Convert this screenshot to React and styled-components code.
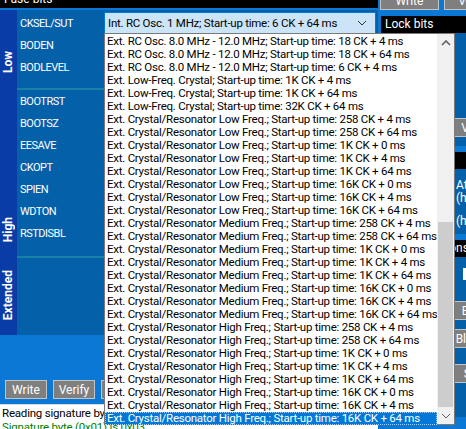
import React from 'react';
import styled, { createGlobalStyle } from 'styled-components';

const GlobalStyle = createGlobalStyle`
  html, body {
    margin: 0;
    padding: 0;
    background: #0a78d4;
    overflow: hidden;
  }
  body {
    font-family: Roboto, "Liberation Sans", sans-serif;
    font-size: 12px;
  }
`;

const lowRows = ['CKSEL/SUT', 'BODEN', 'BODLEVEL'];
const highRows = ['BOOTRST', 'BOOTSZ', 'EESAVE', 'CKOPT', 'SPIEN', 'WDTON', 'RSTDISBL'];

const rcOsc = 'Ext. RC Osc. 8.0 MHz - 12.0 MHz; Start-up time: ';
const lowFreq = 'Ext. Low-Freq. Crystal; Start-up time: ';
const crystal = (f) => `Ext. Crystal/Resonator ${f} Freq.; Start-up time: `;
const times = ['258 CK + 4 ms', '258 CK + 64 ms', '1K CK + 0 ms', '1K CK + 4 ms', '1K CK + 64 ms', '16K CK + 0 ms', '16K CK + 4 ms', '16K CK + 64 ms'];

const options = [
  rcOsc + '18 CK + 4 ms',
  rcOsc + '18 CK + 64 ms',
  rcOsc + '6 CK + 4 ms',
  lowFreq + '1K CK + 4 ms',
  lowFreq + '1K CK + 64 ms',
  lowFreq + '32K CK + 64 ms',
  ...times.map((t) => crystal('Low') + t),
  ...times.map((t) => crystal('Medium') + t),
  ...times.map((t) => crystal('High') + t),
];
const selected = options.length - 1;

const Chevron = ({ up, color = '#333' }) => (
  <svg width="10" height="6" viewBox="0 0 10 6">
    <polyline
      points={up ? '1,5 5,1 9,5' : '1,1 5,5 9,1'}
      fill="none"
      stroke={color}
      strokeWidth={up ? 1.6 : 1}
    />
  </svg>
);

function App() {
  return (
    <>
      <GlobalStyle />
      <Window>
        <FuseColumn>
          <SectionHeader>Fuse bits</SectionHeader>
          <FuseBody>
            <Group>
              <Strip pad={17}><StripLabel>Low</StripLabel></Strip>
              <GroupRows top={2} bottom={10}>
                <Row>
                  <Label>{lowRows[0]}</Label>
                  <Combo>
                    <ComboText>Int. RC Osc. 1 MHz; Start-up time: 6 CK + 64 ms</ComboText>
                    <Chevron />
                    <DropList>
                      <Items>
                        {options.map((o, i) => (
                          <Item key={i} active={i === selected}>{o}</Item>
                        ))}
                      </Items>
                      <ScrollBar>
                        <ArrowBox><Chevron up color="#606060" /></ArrowBox>
                        <Track>
                          <Thumb />
                        </Track>
                        <ArrowBox><Chevron color="#606060" /></ArrowBox>
                      </ScrollBar>
                    </DropList>
                  </Combo>
                </Row>
                {lowRows.slice(1).map((r) => (
                  <Row key={r}><Label>{r}</Label></Row>
                ))}
              </GroupRows>
            </Group>
            <Group>
              <Strip pad={16}><StripLabel>High</StripLabel></Strip>
              <GroupRows top={0} bottom={12}>
                {highRows.map((r) => (
                  <Row key={r}><Label>{r}</Label></Row>
                ))}
              </GroupRows>
            </Group>
            <Group>
              <Strip pad={15}><StripLabel>Extended</StripLabel></Strip>
              <GroupRows top={0} bottom={77} last />
            </Group>
          </FuseBody>
          <ButtonBar>
            <GrayButton>Write</GrayButton>
            <GrayButton>Verify</GrayButton>
            <GrayButton>Read</GrayButton>
          </ButtonBar>
          <Log>
            <LogLine>Reading signature bytes...</LogLine>
            <LogLine ok>Signature byte (0x01) is 0x03</LogLine>
          </Log>
        </FuseColumn>

        <SideColumn>
          <SideButtons>
            <GrayButton wide>Write</GrayButton>
            <GrayButton wide>Verify</GrayButton>
          </SideButtons>
          <SideGroup>
            <SectionHeader>Lock bits</SectionHeader>
            <LockBody>
              <SideButtons>
                <GrayButton wide>Write</GrayButton>
                <GrayButton wide>Verify</GrayButton>
              </SideButtons>
            </LockBody>
          </SideGroup>
          <SideGroup>
            <SectionHeader>Signature</SectionHeader>
            <InfoBody>
              <InfoRow><span>Vendor</span><span>Atmel</span></InfoRow>
              <InfoRow><span>Device</span><span>(hex)</span></InfoRow>
              <InfoRow spaced><span>Size</span><span>(hex)</span></InfoRow>
            </InfoBody>
          </SideGroup>
          <SideGroup>
            <SectionHeader>Chip operations</SectionHeader>
            <OpsBody>
              <InputBox />
              <SideButtons>
                <GrayButton wide>Read</GrayButton>
                <GrayButton wide>Erase</GrayButton>
              </SideButtons>
              <SideButtons>
                <GrayButton wide>Check</GrayButton>
                <GrayButton wide>Blank is</GrayButton>
              </SideButtons>
              <SideButtons spaced>
                <GrayButton wide>Load</GrayButton>
                <GrayButton wide>Save</GrayButton>
              </SideButtons>
            </OpsBody>
          </SideGroup>
        </SideColumn>
      </Window>
    </>
  );
}

const Window = styled.div`
  width: 466px;
  height: 438px;
  margin-top: -9px;
  display: grid;
  grid-template-columns: 378px 140px;
  overflow: hidden;
  background: #0a78d4;
`;

const FuseColumn = styled.div`
  display: flex;
  flex-direction: column;
  min-width: 0;
`;

const SectionHeader = styled.div`
  height: 17px;
  line-height: 17px;
  padding-left: 4px;
  background: #000;
  color: #fff;
  font-size: 12px;
  white-space: nowrap;
`;

const FuseBody = styled.div`
  border-top: 2px solid #0a78d4;
  display: flex;
  flex-direction: column;
`;

const Group = styled.div`
  display: flex;
`;

const Strip = styled.div`
  width: 17px;
  flex-shrink: 0;
  background: #0a3ca8;
  display: flex;
  flex-direction: column;
  justify-content: flex-end;
  align-items: center;
  padding-bottom: ${(p) => p.pad}px;
  box-sizing: border-box;
`;

const StripLabel = styled.div`
  writing-mode: vertical-rl;
  transform: rotate(180deg);
  color: #fff;
  font-weight: bold;
  font-size: 12px;
  line-height: 17px;
`;

const GroupRows = styled.div`
  flex: 1;
  background: #0560aa;
  padding: ${(p) => p.top}px 0 ${(p) => p.bottom}px 3px;
  border-bottom: ${(p) => (p.last ? 'none' : '2px solid #1582a6')};
`;

const Row = styled.div`
  height: 22px;
  display: flex;
  align-items: center;
`;

const Label = styled.div`
  width: 84px;
  color: #fff;
  font-size: 11px;
  letter-spacing: -0.5px;
`;

const Combo = styled.div`
  position: relative;
  width: 272px;
  height: 22px;
  box-sizing: border-box;
  border: 1px solid #0078d7;
  background: #cce4f7;
  display: flex;
  align-items: center;
  justify-content: space-between;
  padding: 0 8px 0 3px;
`;

const ComboText = styled.span`
  color: #000;
  font-size: 11.5px;
  letter-spacing: -0.25px;
  white-space: nowrap;
`;

const DropList = styled.div`
  position: absolute;
  top: 20px;
  left: -1px;
  width: 351px;
  height: 392px;
  box-sizing: border-box;
  border: 1px solid #7a7a7a;
  background: #fff;
  display: flex;
  z-index: 10;
`;

const Items = styled.div`
  flex: 1;
  min-width: 0;
  padding-top: 1px;
`;

const Item = styled.div`
  height: 13px;
  line-height: 13px;
  padding-left: 2px;
  font-size: 11.5px;
  letter-spacing: -0.25px;
  white-space: nowrap;
  overflow: hidden;
  color: ${(p) => (p.active ? '#fff' : '#000')};
  background: ${(p) => (p.active ? '#0078d7' : 'transparent')};
  outline: ${(p) => (p.active ? '1px dotted #a8d0f5' : 'none')};
  outline-offset: -1px;
`;

const ScrollBar = styled.div`
  width: 17px;
  background: #f0f0f0;
  display: flex;
  flex-direction: column;
`;

const ArrowBox = styled.div`
  height: 17px;
  display: flex;
  align-items: center;
  justify-content: center;
`;

const Track = styled.div`
  flex: 1;
  display: flex;
  flex-direction: column;
  justify-content: flex-end;
`;

const Thumb = styled.div`
  height: 185px;
  margin: 0 1px;
  background: #cdcdcd;
`;

const ButtonBar = styled.div`
  height: 69px;
  box-sizing: border-box;
  display: flex;
  align-items: flex-end;
  gap: 6px;
  padding: 0 0 5px 5px;
  background: #0a78d4;
`;

const GrayButton = styled.div`
  width: ${(p) => (p.wide ? '59px' : '42px')};
  height: 19px;
  box-sizing: border-box;
  flex-shrink: 0;
  border: 1px solid #c4c4c4;
  background: #7f7f7f;
  color: #fff;
  font-size: 12px;
  display: flex;
  align-items: center;
  justify-content: center;
  white-space: nowrap;
`;

const Log = styled.div`
  flex: 1;
  background: #fff;
  border-top: 1px solid #d8d8d8;
  padding: 1px 2px;
  overflow: hidden;
`;

const LogLine = styled.div`
  font-size: 11.5px;
  letter-spacing: -0.2px;
  line-height: 14px;
  white-space: nowrap;
  color: ${(p) => (p.ok ? '#008000' : '#000')};
`;

const SideColumn = styled.div`
  display: flex;
  flex-direction: column;
  gap: 6px;
  padding-left: 2px;
  background: #0a78d4;
`;

const SideButtons = styled.div`
  display: flex;
  gap: 5px;
  margin-top: ${(p) => (p.spaced ? '7px' : '0')};
`;

const SideGroup = styled.div`
  display: flex;
  flex-direction: column;
  margin-left: 1px;
`;

const LockBody = styled.div`
  height: 113px;
  box-sizing: border-box;
  background: #0560aa;
  display: flex;
  flex-direction: column;
  justify-content: flex-end;
  padding: 6px 0 9px 2px;
`;

const InfoBody = styled.div`
  height: 65px;
  box-sizing: border-box;
  background: #0560aa;
  display: flex;
  flex-direction: column;
  padding: 10px 0 0 2px;
  gap: 1px;
`;

const InfoRow = styled.div`
  display: grid;
  grid-template-columns: 73px 1fr;
  line-height: 12px;
  margin-top: ${(p) => (p.spaced ? '10px' : '0')};
  color: #fff;
  font-size: 12px;
`;

const OpsBody = styled.div`
  height: 160px;
  box-sizing: border-box;
  background: #0560aa;
  display: flex;
  flex-direction: column;
  gap: 9px;
  padding: 11px 0 0 2px;
`;

const InputBox = styled.div`
  width: 40px;
  height: 12px;
  margin: 0 0 12px 80px;
  background: #fff;
`;

export default App;
